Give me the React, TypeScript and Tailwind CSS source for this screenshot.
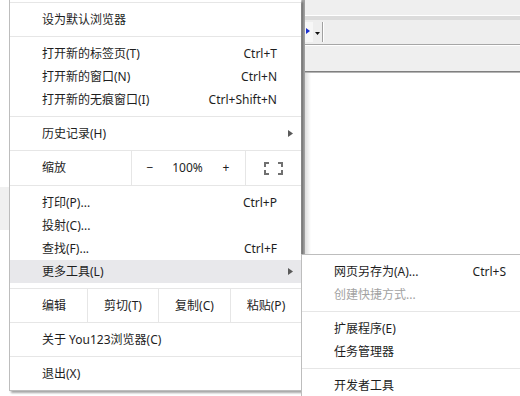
import React from "react";

const Sep = () => <div className="h-px bg-[#e6e6e6]" />;

const Arrow = () => (
  <svg width="5" height="7" viewBox="0 0 5 7">
    <path d="M0 0 L5 3.5 L0 7 Z" fill="#5a5a5a" />
  </svg>
);

function Item({
  label,
  shortcut,
  arrow,
  highlight,
  disabled,
}: {
  label: string;
  shortcut?: string;
  arrow?: boolean;
  highlight?: boolean;
  disabled?: boolean;
}) {
  return (
    <div
      className={
        "h-[23px] flex items-center justify-between pl-[32px] " +
        (arrow ? "pr-[8px] " : "pr-[24px] ") +
        (highlight ? "bg-[#e8e8eb] " : "") +
        (disabled ? "text-[#a2a2a2]" : "text-[#1e1e1e]")
      }
    >
      <span>{label}</span>
      {shortcut ? <span>{shortcut}</span> : null}
      {arrow ? <Arrow /> : null}
    </div>
  );
}

const Section = ({ children }: { children: React.ReactNode }) => (
  <div className="py-[5px]">{children}</div>
);

export default function App() {
  return (
    <div
      className="relative w-[520px] h-[396px] overflow-hidden bg-white text-[12px]"
      style={{ fontFamily: '"Noto Sans", "Noto Sans CJK SC", sans-serif' }}
    >
      {/* background */}
      <div className="flex h-full">
        <div className="w-[301px] flex">
          <div className="w-[9px] flex flex-col">
            <div className="h-[187px]" />
            <div className="h-[43px] bg-[#f0f0f0]" />
          </div>
        </div>
        <div className="flex-1 flex">
          <div className="w-px bg-[#c6c6c6]" />
          <div className="w-[3px] bg-[#a3a3a3]" />
          <div className="flex-1 flex flex-col">
            <div className="h-[15px] bg-[#efefef]" />
            <div className="h-px bg-white" />
            <div className="h-[4px] bg-[#dcdcdc]" />
            <div className="h-[24px] bg-[#eeeeee] flex items-stretch">
              <div className="w-[8px] my-[2px] bg-[#f7f7f7] relative">
                <svg width="4" height="6" viewBox="0 0 4 6" className="absolute left-[1px] top-[6px]">
                  <path d="M0 0 L4 3 L0 6 Z" fill="#1a2fd0" />
                </svg>
              </div>
              <div className="w-[9px] flex items-center justify-center">
                <svg width="5" height="3" viewBox="0 0 5 3" className="mt-[3px]">
                  <path d="M0 0 H5 L2.5 3 Z" fill="#111" />
                </svg>
              </div>
              <div className="w-px my-[2px] bg-[#a0a0a0]" />
              <div className="w-px my-[2px] bg-white" />
            </div>
            <div className="h-px bg-[#a6a6a6]" />
            <div className="h-px bg-white" />
            <div className="h-[25px] bg-[#efefef]" />
            <div className="h-px bg-[#7f7f7f]" />
            <div className="h-px bg-[#b4b4b4]" />
            <div className="flex-1 flex">
              <div className="w-[6px] bg-gradient-to-r from-[#dedede] to-white" />
              <div className="flex-1 bg-white" />
            </div>
          </div>
        </div>
      </div>

      {/* main menu */}
      <div className="absolute left-[9px] top-0 w-[292px] bg-white border-l border-b border-[#bdbdbd] shadow-[2px_2px_2px_rgba(0,0,0,0.35)]">
        <div className="h-[2px]" />
        <Sep />
        <Section>
          <Item label="设为默认浏览器" />
        </Section>
        <Sep />
        <Section>
          <Item label="打开新的标签页(T)" shortcut="Ctrl+T" />
          <Item label="打开新的窗口(N)" shortcut="Ctrl+N" />
          <Item label="打开新的无痕窗口(I)" shortcut="Ctrl+Shift+N" />
        </Section>
        <Sep />
        <Section>
          <Item label="历史记录(H)" arrow />
        </Section>
        <Sep />
        <div className="h-[34px] flex text-[#1e1e1e]">
          <div className="w-[122px] pl-[32px] flex items-center border-r border-[#e6e6e6]">缩放</div>
          <div className="w-[114px] flex items-center border-r border-[#e6e6e6]">
            <span className="w-[36px] text-center">−</span>
            <span className="w-[39px] text-center">100%</span>
            <span className="w-[38px] text-center">+</span>
          </div>
          <div className="flex-1 flex items-center justify-center">
            <svg width="19" height="13" viewBox="0 0 19 13" fill="none" stroke="#707070" strokeWidth="2">
              <path d="M1 5 V1 H5 M14 1 H18 V5 M18 8 V12 H14 M5 12 H1 V8" />
            </svg>
          </div>
        </div>
        <Sep />
        <Section>
          <Item label="打印(P)..." shortcut="Ctrl+P" />
          <Item label="投射(C)..." />
          <Item label="查找(F)..." shortcut="Ctrl+F" />
          <Item label="更多工具(L)" arrow highlight />
        </Section>
        <Sep />
        <div className="h-[33px] flex text-[#1e1e1e]">
          <div className="w-[78px] pl-[32px] flex items-center border-r border-[#e6e6e6]">编辑</div>
          <div className="w-[71px] flex items-center justify-center border-r border-[#e6e6e6]">剪切(T)</div>
          <div className="w-[72px] flex items-center justify-center border-r border-[#e6e6e6]">复制(C)</div>
          <div className="flex-1 flex items-center justify-center">粘贴(P)</div>
        </div>
        <Sep />
        <Section>
          <Item label="关于 You123浏览器(C)" />
        </Section>
        <Sep />
        <Section>
          <Item label="退出(X)" />
        </Section>
      </div>

      {/* submenu */}
      <div className="absolute left-[301px] top-[254px] w-[229px] bg-white border-l border-t border-[#bdbdbd]">
        <Section>
          <Item label="网页另存为(A)..." shortcut="Ctrl+S" />
          <Item label="创建快捷方式..." disabled />
        </Section>
        <Sep />
        <Section>
          <Item label="扩展程序(E)" />
          <Item label="任务管理器" />
        </Section>
        <Sep />
        <Section>
          <Item label="开发者工具" />
        </Section>
      </div>
    </div>
  );
}
